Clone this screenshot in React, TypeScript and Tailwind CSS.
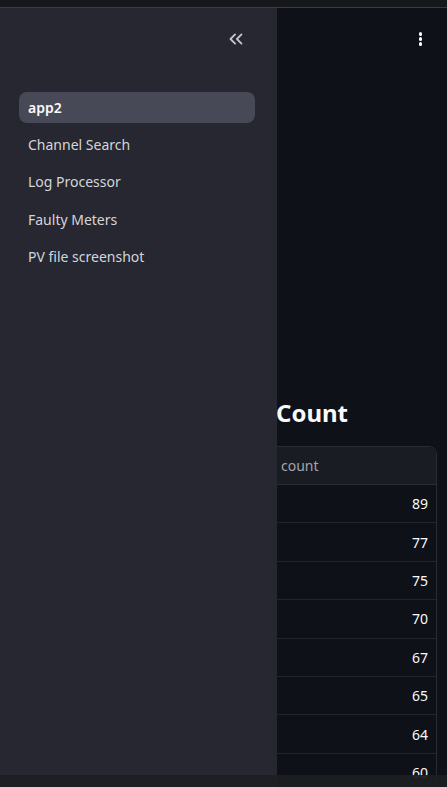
import { ChevronsLeft } from 'lucide-react';

const pages = ['Channel Search', 'Log Processor', 'Faulty Meters', 'PV file screenshot'];
const counts = [89, 77, 75, 70, 67, 65, 64, 60];

const App = () => {
  return (
    <div
      className="relative h-[787px] w-[447px] overflow-hidden bg-[#0e1117] text-white"
      style={{ fontFamily: '"Noto Sans", "Open Sans", sans-serif' }}
    >
      {/* browser top strip */}
      <div className="h-[7px] bg-[#16171b]" />
      <div className="h-px bg-[#3b3c42]" />

      {/* main area */}
      <main className="flex flex-col px-[10px]">
        <div className="flex h-[62px] items-center justify-end pr-[15px]">
          <div className="flex flex-col gap-[1.5px]">
            <span className="h-[3.5px] w-[3.5px] rounded-full bg-white" />
            <span className="h-[3.5px] w-[3.5px] rounded-full bg-white" />
            <span className="h-[3.5px] w-[3.5px] rounded-full bg-white" />
          </div>
        </div>

        <h1 className="mt-[326px] pl-[266px] text-[24px] font-bold leading-[34px] text-[#fafafa]">
          Count
        </h1>

        <div className="mt-[16px] overflow-hidden rounded-t-[8px] border border-[#2a2c34]">
          <div className="grid h-[38px] grid-cols-[1fr_165px] items-center border-b border-[#2a2c34] bg-[#1a1c23] text-[14px] text-[#a3a5ad]">
            <span className="pl-[10px]">meter</span>
            <span className="pl-[10px]">count</span>
          </div>
          {counts.map((c, i) => (
            <div
              key={i}
              className="grid h-[38.4px] grid-cols-[1fr_165px] items-center border-b border-[#23252c] text-[14px] text-[#fafafa]"
            >
              <span className="pl-[10px]">{i}</span>
              <span className="pr-[8px] text-right">{c}</span>
            </div>
          ))}
        </div>
      </main>

      {/* sidebar overlay */}
      <aside className="absolute bottom-0 left-0 top-[8px] w-[277px] bg-[#262730]">
        <div className="flex h-[62px] items-center justify-end pr-[30px]">
          <ChevronsLeft className="h-[22px] w-[22px] text-[#c4c5cc]" strokeWidth={2} />
        </div>
        <nav className="flex flex-col gap-[6.2px] pl-[19px] pr-[22px] pt-[22px]">
          <div className="flex h-[31px] items-center rounded-[8px] bg-[#474956] px-[9px] text-[14px] font-semibold text-[#fafafa]">
            app2
          </div>
          {pages.map((p) => (
            <div
              key={p}
              className="flex h-[31px] items-center px-[9px] text-[14px] text-[#d4d5da]"
            >
              {p}
            </div>
          ))}
        </nav>
      </aside>

      {/* browser bottom bar */}
      <div className="absolute bottom-0 left-0 right-0 h-[12px] bg-[#1e1f22]/95" />
    </div>
  );
};

export default App;
